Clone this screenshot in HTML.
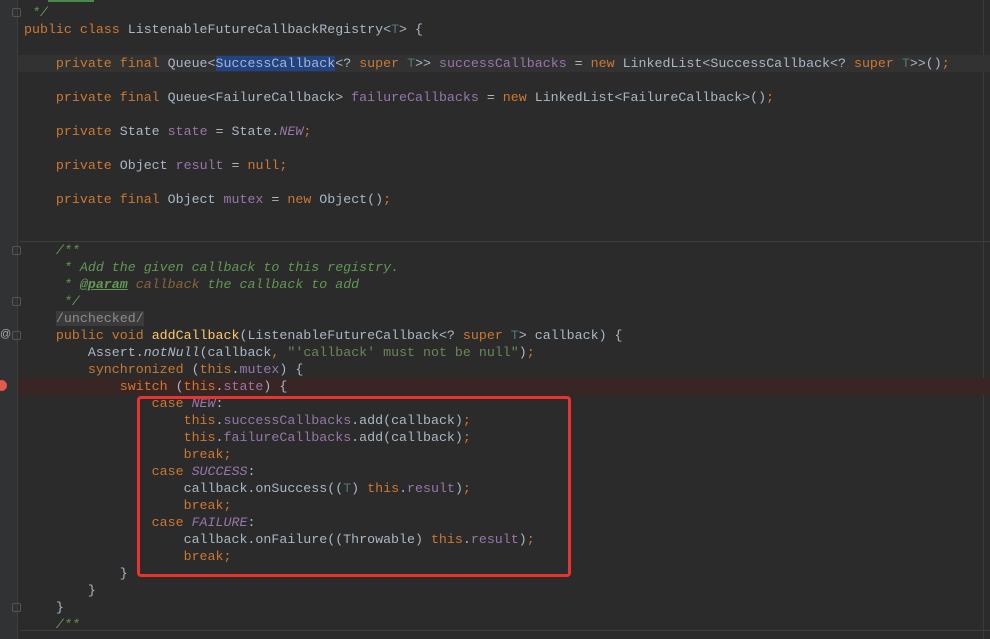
<!DOCTYPE html>
<html><head><meta charset="utf-8"><style>
html,body{margin:0;padding:0;width:990px;height:639px;overflow:hidden;background:#2b2b2b}
#g{position:absolute;left:0;top:0;width:17px;height:639px;background:#303234;border-right:1px solid #3c3f41}
pre{position:absolute;left:24px;top:4px;margin:0;font-family:"Liberation Mono",monospace;font-size:13.3px;line-height:17px;color:#a9b7c6}
.k{color:#cc7832}.f{color:#9876aa}.s{color:#6a8759}.c{color:#629755;font-style:italic}.cg{color:#808080}
.i{font-style:italic}.t{color:#507874}.m{color:#ffc66d}.sel{background:#214283}.pl{color:#8a653b;font-style:italic}
.u{text-decoration:underline}.an{color:#bbb529}.un{background:#3b3b3b;color:#8c8c8c}
.hl{position:absolute;left:18px;width:972px;height:17px}
#box{position:absolute;left:137px;top:396px;width:428px;height:175px;border:3px solid #e8332e;border-radius:4px}
.bp{position:absolute;left:-4px;top:380px;width:11px;height:11px;border-radius:50%;background:#e05a4f}
.sep{position:absolute;left:20px;width:970px;height:1px;background:#3d3d3d}
.rm{position:absolute;left:983px;top:0;width:1px;height:639px;background:#3a3a3a}
.fold{position:absolute;left:12px;width:9px;height:9px;border:1px solid #555;border-radius:2px;box-sizing:border-box}
</style></head><body>
<div id="g"></div>
<div class="rm"></div>
<div class="hl" style="top:55px;background:#323232"></div>
<div class="hl" style="top:378px;background:#3a2525"></div>
<div class="sep" style="top:241px"></div>
<div class="sep" style="top:630px"></div>
<div class="bp"></div>
<div class="fold" style="top:8px"></div>
<div class="fold" style="top:246px"></div>
<div class="fold" style="top:297px"></div>
<div class="fold" style="top:331px"></div>
<div class="fold" style="top:603px"></div>
<div style="position:absolute;left:0;top:328px;font:11px 'Liberation Sans',sans-serif;color:#aaa">@</div>
<div style="position:absolute;left:48px;top:0;width:46px;height:2px;background:#4a8a4a"></div>
<pre><span class="c"> */</span>
<span class="k">public class </span>ListenableFutureCallbackRegistry&lt;<span class="t">T</span>&gt; {

    <span class="k">private final </span>Queue&lt;<span class="sel">SuccessCallback</span>&lt;? <span class="k">super </span><span class="t">T</span>&gt;&gt; <span class="f">successCallbacks</span> = <span class="k">new </span>LinkedList&lt;SuccessCallback&lt;? <span class="k">super </span><span class="t">T</span>&gt;&gt;()<span class="k">;</span>

    <span class="k">private final </span>Queue&lt;FailureCallback&gt; <span class="f">failureCallbacks</span> = <span class="k">new </span>LinkedList&lt;FailureCallback&gt;()<span class="k">;</span>

    <span class="k">private </span>State <span class="f">state</span> = State.<span class="f i">NEW</span><span class="k">;</span>

    <span class="k">private </span>Object <span class="f">result</span> = <span class="k">null;</span>

    <span class="k">private final </span>Object <span class="f">mutex</span> = <span class="k">new </span>Object()<span class="k">;</span>


    <span class="c">/**</span>
<span class="c">     * Add the given callback to this registry.</span>
<span class="c">     * <span class="u" style="font-weight:bold">@param</span> <span class="pl">callback</span> the callback to add</span>
<span class="c">     */</span>
    <span class="un">/unchecked/</span>
    <span class="k">public void </span><span class="m">addCallback</span>(ListenableFutureCallback&lt;? <span class="k">super </span><span class="t">T</span>&gt; callback) {
        Assert.<span class="i">notNull</span>(callback<span class="k">, </span><span class="s">"'callback' must not be null"</span>)<span class="k">;</span>
        <span class="k">synchronized </span>(<span class="k">this</span>.<span class="f">mutex</span>) {
            <span class="k">switch </span>(<span class="k">this</span>.<span class="f">state</span>) {
                <span class="k">case </span><span class="f i">NEW</span>:
                    <span class="k">this</span>.<span class="f">successCallbacks</span>.add(callback)<span class="k">;</span>
                    <span class="k">this</span>.<span class="f">failureCallbacks</span>.add(callback)<span class="k">;</span>
                    <span class="k">break;</span>
                <span class="k">case </span><span class="f i">SUCCESS</span>:
                    callback.onSuccess((<span class="t">T</span>) <span class="k">this</span>.<span class="f">result</span>)<span class="k">;</span>
                    <span class="k">break;</span>
                <span class="k">case </span><span class="f i">FAILURE</span>:
                    callback.onFailure((Throwable) <span class="k">this</span>.<span class="f">result</span>)<span class="k">;</span>
                    <span class="k">break;</span>
            }
        }
    }
    <span class="c">/**</span></pre>
<div id="box"></div>
</body></html>
